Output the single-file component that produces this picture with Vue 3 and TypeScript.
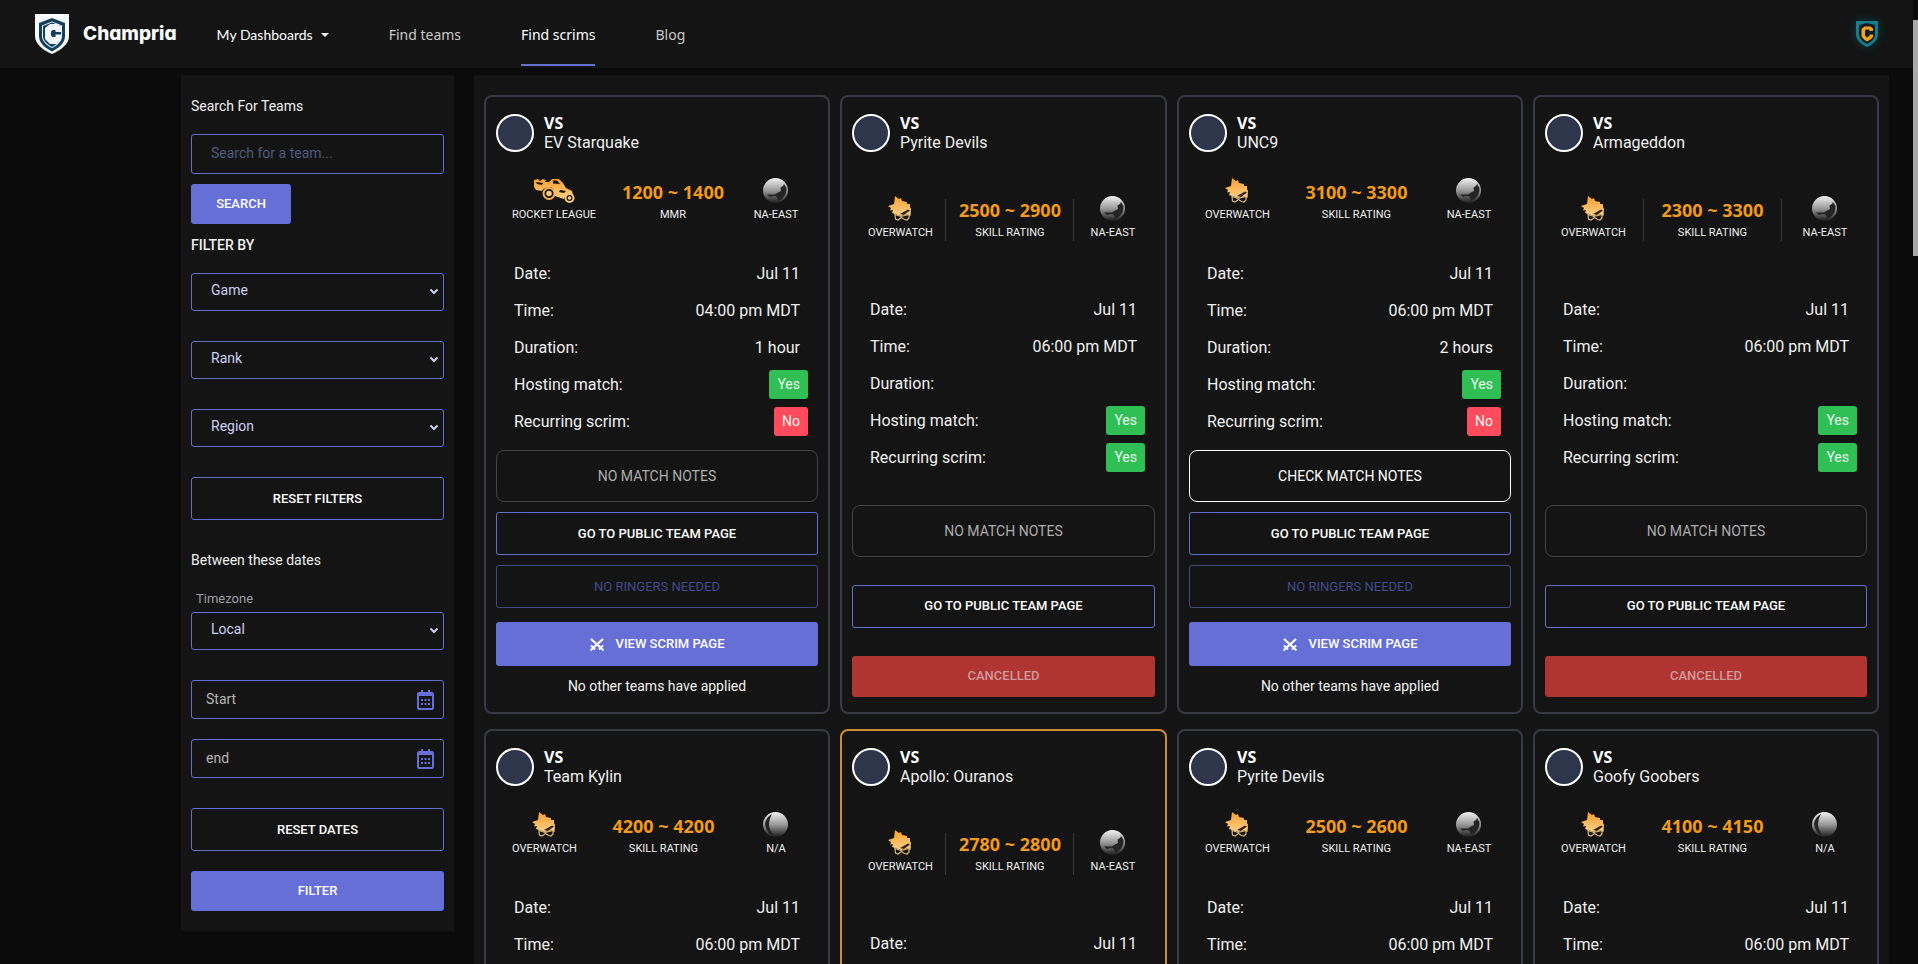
<script setup lang="ts">
import { ref } from 'vue'

interface Scrim {
  team: string
  game: 'ROCKET LEAGUE' | 'OVERWATCH'
  rating: string
  unit: string
  region: string
  time: string
  duration: string
  recurring: boolean
  notes: boolean
  divided: boolean
  cancelled: boolean
  highlight: boolean
}

const base = {
  game: 'OVERWATCH' as const,
  unit: 'SKILL RATING',
  region: 'NA-EAST',
  time: '06:00 pm MDT',
  duration: '2 hours',
  recurring: false,
  notes: false,
  divided: false,
  cancelled: false,
  highlight: false,
}
const off = { duration: '', recurring: true, divided: true, cancelled: true }

const scrims: Scrim[] = [
  { ...base, team: 'EV Starquake', game: 'ROCKET LEAGUE', rating: '1200 ~ 1400', unit: 'MMR', time: '04:00 pm MDT', duration: '1 hour' },
  { ...base, ...off, team: 'Pyrite Devils', rating: '2500 ~ 2900' },
  { ...base, team: 'UNC9', rating: '3100 ~ 3300', notes: true },
  { ...base, ...off, team: 'Armageddon', rating: '2300 ~ 3300' },
  { ...base, team: 'Team Kylin', rating: '4200 ~ 4200', region: 'N/A' },
  { ...base, ...off, team: 'Apollo: Ouranos', rating: '2780 ~ 2800', highlight: true },
  { ...base, team: 'Pyrite Devils', rating: '2500 ~ 2600' },
  { ...base, team: 'Goofy Goobers', rating: '4100 ~ 4150', region: 'N/A' },
]

const filters = ['Game', 'Rank', 'Region']
const dates = ['Start', 'end']
const search = ref('')
</script>

<template>
  <div class="app">
    <svg class="defs" aria-hidden="true">
      <defs>
        <linearGradient id="gold" x1="0" y1="0" x2="0" y2="1">
          <stop offset="0" stop-color="#f99f2c" />
          <stop offset="1" stop-color="#fbd08a" />
        </linearGradient>
        <linearGradient id="silver" x1="0" y1="0" x2="0" y2="1">
          <stop offset="0" stop-color="#f2f2f2" />
          <stop offset="0.5" stop-color="#9a9a9a" />
          <stop offset="1" stop-color="#1c1c1c" />
        </linearGradient>
      </defs>
    </svg>

    <div class="page">
      <header class="bar">
        <a class="brand" href="#">
          <svg width="34" height="40" viewBox="0 0 34 40" aria-hidden="true">
            <path d="M0 0H34V22C34 30 26 36 17 40C8 36 0 30 0 22Z" fill="#f7fbfd" />
            <path d="M17 4L30 9V22C30 29 24 34 17 37.500C10 34 4 29 4 22V9Z" fill="#12405c" />
            <path d="M17 7.500L27 11.500V22C27 27 22.500 31.500 17 34C11.500 31.500 7 27 7 22V11.500Z" fill="#f0f6f9" />
            <path d="M17 8.500L26 12V22C26 26.500 22 30.500 17 33C12 30.500 8 26.500 8 22V12Z" fill="#12405c" />
            <path d="M26 18V12.500L22.500 10H15L10 14V25L15 30H21.500L26 26V20.500H20.500V23H17.500L16 21.500V17.500L17.500 16H20.500V18Z" fill="#f0f6f9" />
          </svg>
          <span>Champria</span>
        </a>
        <nav class="nav">
          <button class="nav-link menu lit" type="button">My Dashboards <i class="caret"></i></button>
          <a class="nav-link" href="#">Find teams</a>
          <a class="nav-link lit active" href="#">Find scrims</a>
          <a class="nav-link" href="#">Blog</a>
        </nav>
        <button class="profile" type="button" aria-label="Profile">
          <svg width="24" height="28" viewBox="0 0 24 28" aria-hidden="true">
            <path d="M1 1H23V14C23 20 18 24.500 12 27C6 24.500 1 20 1 14Z" fill="#147d8c" />
            <path d="M4 5L12 3L20 5V14C20 18 17 21.500 12 24C7 21.500 4 18 4 14Z" fill="#0d1c20" />
            <path d="M18 11V8.500L15.500 6.500H9.500L6.500 9V16.500L9.500 20L12 21.500L15.500 19.500L18 17V14.500H14.500V16L12 17.500L10 15.500V10.500L11 9.500H14L14.500 11Z" fill="#f5a21c" />
          </svg>
        </button>
      </header>

      <div class="body">
        <form class="side" @submit.prevent>
          <label class="heading" for="team">Search For Teams</label>
          <input id="team" v-model="search" class="field" type="text" placeholder="Search for a team..." />
          <button class="btn solid search" type="submit">SEARCH</button>
          <h2 class="heading strong">FILTER BY</h2>
          <div v-for="f in filters" :key="f" class="pick">
            <select :aria-label="f"><option>{{ f }}</option></select>
            <svg width="10" height="8" viewBox="0 0 10 8" aria-hidden="true"><path d="M1.500 1.500L5 5L8.500 1.500" /></svg>
          </div>
          <button class="btn outline" type="button">RESET FILTERS</button>
          <h2 class="heading dates">Between these dates</h2>
          <label class="zone" for="zone">Timezone</label>
          <div class="pick">
            <select id="zone"><option>Local</option></select>
            <svg width="10" height="8" viewBox="0 0 10 8" aria-hidden="true"><path d="M1.500 1.500L5 5L8.500 1.500" /></svg>
          </div>
          <div v-for="d in dates" :key="d" class="date">
            <input type="text" :placeholder="d" :aria-label="d" />
            <svg width="17" height="20" viewBox="0 0 17 20" aria-hidden="true">
              <path d="M4 0H6V2H11V0H13V2H15Q17 2 17 4V18Q17 20 15 20H2Q0 20 0 18V4Q0 2 2 2H4ZM2 6V18H15V6Z" fill-rule="evenodd" />
              <path d="M4 9H6V11H4ZM7.500 9H9.500V11H7.500ZM11 9H13V11H11ZM4 13H6V15H4ZM7.500 13H9.500V15H7.500ZM11 13H13V15H11Z" />
            </svg>
          </div>
          <button class="btn outline reset" type="button">RESET DATES</button>
          <button class="btn solid filter" type="submit">FILTER</button>
        </form>

        <main class="board">
          <article v-for="(s, i) in scrims" :key="i" class="card" :class="{ highlight: s.highlight }">
            <div class="who">
              <span class="avatar"></span>
              <div>
                <div class="vs">VS</div>
                <div class="team">{{ s.team }}</div>
              </div>
            </div>

            <div class="stats">
              <div class="stat">
                <svg v-if="s.game === 'ROCKET LEAGUE'" class="icon" width="42" height="25" viewBox="0 0 42 25" aria-hidden="true">
                  <path d="M1 2L5 1L7 3L10 1L13 2L12 4L16 4L19 1L26 1L30 5L33 10L39 13L40 17L36 16Q32 17 31 21L22 18Q22 9 16 9Q10 10 9 13L3 12L1 9Z" fill="url(#gold)" />
                  <path d="M3 4L10 5L9 7L4 6ZM20 2.500L24 2.500L27 6L20 5.500ZM27 12L33 13L31 15L26 14Z" fill="#171512" />
                  <circle cx="16" cy="15.500" r="5.500" fill="#171512" stroke="#fab152" stroke-width="2" />
                  <circle cx="16" cy="15.500" r="2.800" fill="#fac577" />
                  <circle cx="36.500" cy="20" r="4" fill="#171512" stroke="#fbc87d" stroke-width="2" />
                  <circle cx="36.500" cy="20" r="1.800" fill="#fbd08a" />
                </svg>
                <svg v-else class="icon" width="24" height="25" viewBox="0 0 24 25" aria-hidden="true">
                  <path d="M7 0L11 3L13 2L14 5L19 6L19 8L22 8L22 11L23 13L22.500 20L19 18.500L13 20L7 18L4 17L5 14L2 14.500L3 12L0 10L6 8Z" fill="url(#gold)" />
                  <path d="M12 18L20 13.500L22 14.500L16 19Z" fill="#33261a" />
                  <path d="M7 18.500L13 20.500L21 18.500L21 22L19 24L16.500 23.500L13.500 21.500L10 24L7.500 23Z" fill="#171512" stroke="#dcb87c" stroke-width="1.200" />
                </svg>
                <span>{{ s.game }}</span>
              </div>
              <i v-if="s.divided" class="rule"></i>
              <div class="stat">
                <strong>{{ s.rating }}</strong>
                <span>{{ s.unit }}</span>
              </div>
              <i v-if="s.divided" class="rule"></i>
              <div class="stat region">
                <svg class="icon" width="25" height="25" viewBox="0 0 25 25" aria-hidden="true">
                  <circle cx="12.500" cy="12.500" r="12.500" fill="url(#silver)" />
                  <path v-if="s.region === 'N/A'" d="M9 2Q3 5 2 12Q3 19 8 23L10 23Q6 17 6 12Q6 7 9 2Z" fill="#242424" />
                  <path v-else d="M21 6L23.500 10Q24 17 18 21.500L15 22.500L13.500 18.500L10 18L7 19L4 16.500L12 16.500L15 14.500L18 13L17.500 9.500L20 8Z" fill="#242424" />
                </svg>
                <span>{{ s.region }}</span>
              </div>
            </div>

            <dl class="details">
              <div><dt>Date:</dt><dd>Jul 11</dd></div>
              <div><dt>Time:</dt><dd>{{ s.time }}</dd></div>
              <div><dt>Duration:</dt><dd>{{ s.duration }}</dd></div>
              <div><dt>Hosting match:</dt><dd class="badge yes">Yes</dd></div>
              <div>
                <dt>Recurring scrim:</dt>
                <dd class="badge" :class="s.recurring ? 'yes' : 'no'">{{ s.recurring ? 'Yes' : 'No' }}</dd>
              </div>
            </dl>

            <button v-if="s.notes" class="notes on" type="button">CHECK MATCH NOTES</button>
            <button v-else class="notes" type="button" disabled>NO MATCH NOTES</button>
            <a class="btn outline" href="#">GO TO PUBLIC TEAM PAGE</a>
            <button v-if="s.cancelled" class="btn cancelled" type="button" disabled>CANCELLED</button>
            <template v-else>
              <button class="btn outline faded" type="button" disabled>NO RINGERS NEEDED</button>
              <a class="btn solid view" href="#">
                <svg width="14" height="13" viewBox="0 0 14 13" aria-hidden="true">
                  <path d="M1 1L11 10M13 1L3 10" fill="none" stroke="#fff" stroke-width="2.200" />
                  <path d="M1 7.500L5 11.500M13 7.500L9 11.500M3 10L0.500 12.500M11 10L13.500 12.500" fill="none" stroke="#fff" stroke-width="1.800" />
                </svg>
                VIEW SCRIM PAGE
              </a>
              <p class="applied">No other teams have applied</p>
            </template>
          </article>
        </main>
      </div>
    </div>
    <div class="track" aria-hidden="true"><div class="thumb"></div></div>
  </div>
</template>

<style>
body {
  background: #0b0b0b;
}
</style>

<style scoped>
.app {
  display: flex;
  height: 100vh;
  overflow: hidden;
  background: #0b0b0b;
  color: #f0f0f0;
  font-family: Roboto, "Liberation Sans", sans-serif;
  font-size: 14px;
}
.app * {
  box-sizing: border-box;
}
.defs {
  position: absolute;
  width: 0;
  height: 0;
}
button,
input,
select {
  font-family: inherit;
  margin: 0;
}
a {
  text-decoration: none;
}
.page {
  flex: 1;
  min-width: 0;
  overflow-y: auto;
  scrollbar-width: none;
}
.track {
  width: 5px;
  padding-top: 20px;
}
.thumb {
  height: 25%;
  background: #a9a9a9;
}

.bar {
  display: flex;
  align-items: center;
  height: 68px;
  padding: 0 34px 0 35px;
  background: #141414;
}
.brand {
  display: flex;
  align-items: center;
  gap: 14px;
  color: #fff;
  font: 800 19px/40px Inter, sans-serif;
  font-feature-settings: "cv11";
}
.nav {
  display: flex;
  flex: 1;
  gap: 60px;
  margin-left: 40px;
  height: 68px;
  padding-bottom: 2px;
}
.nav-link {
  display: flex;
  align-items: center;
  padding: 5px 0 0;
  border: 0;
  border-bottom: 2px solid transparent;
  background: none;
  color: #c8c8c8;
  font: 14px/20px "Noto Sans", sans-serif;
}
.menu {
  font-family: Lato, sans-serif;
}
.lit {
  color: #fff;
}
.active {
  border-color: #6570d2;
}
.caret {
  margin-left: 8px;
  border: 4px solid transparent;
  border-top-color: #fff;
  border-bottom: 0;
}
.profile {
  padding: 0;
  border: 0;
  background: none;
  filter: drop-shadow(0 0 4px #063e46);
}
.profile svg {
  display: block;
}

.body {
  display: grid;
  grid-template-columns: 273px minmax(0, 1fr);
  gap: 20px;
  align-items: start;
  padding: 7px 24px 0 181px;
}
.side {
  display: flex;
  flex-direction: column;
  padding: 20px 10px;
  background: #141414;
}
.heading {
  margin: 0;
  font-size: 14px;
  font-weight: 400;
  line-height: 22px;
}
.strong {
  margin: 10px 0 17px;
  font-weight: 500;
}
.field {
  height: 40px;
  margin: 17px 0 10px;
  padding: 0 19px 2px;
  border: 1px solid #6570c8;
  border-radius: 3px;
  background: transparent;
  color: #ccd0f0;
  font-size: 14px;
}
.field::placeholder {
  color: #4e5a7c;
}
.pick {
  display: grid;
  align-items: center;
  margin-bottom: 30px;
}
.pick select,
.pick svg {
  grid-area: 1 / 1;
}
.pick select {
  appearance: none;
  width: 100%;
  height: 38px;
  padding: 0 19px 4px;
  border: 1px solid #6570c8;
  border-radius: 3px;
  background: transparent;
  color: #ccd0f0;
  font-size: 14px;
}
.pick svg {
  justify-self: end;
  margin-right: 5px;
  fill: none;
  stroke: #ccd0f0;
  stroke-width: 2;
  pointer-events: none;
}
.btn {
  display: flex;
  flex: none;
  align-items: center;
  justify-content: center;
  height: 43px;
  padding: 0;
  border: 0;
  border-radius: 3px;
  color: #fff;
  font-size: 13px;
  font-weight: 500;
  line-height: 20px;
}
.outline {
  border: 1px solid #6570c8;
  background: transparent;
}
.solid {
  background: #656fd5;
}
.search {
  width: 100px;
  height: 40px;
}
.filter {
  height: 40px;
}
.dates {
  margin: 29px 0 17px;
}
.zone {
  margin-bottom: 2px;
  padding-left: 5px;
  color: #9a9ea6;
  font-size: 13px;
  line-height: 22px;
}
.date {
  display: grid;
  align-items: center;
  margin-bottom: 20px;
}
.date input,
.date svg {
  grid-area: 1 / 1;
}
.date input {
  width: 100%;
  height: 39px;
  padding: 0 14px 2px;
  border: 1px solid #6570c8;
  border-radius: 3px;
  background: transparent;
  color: #b4b4b4;
  font-size: 14px;
}
.date input::placeholder {
  color: #b4b4b4;
}
.date svg {
  justify-self: end;
  margin-right: 10px;
  fill: #656fd5;
}
.reset {
  margin: 10px 0 20px;
}

.board {
  display: grid;
  grid-template-columns: 346fr 327fr 346fr 346fr;
  gap: 15px 10px;
  padding: 20px 10px;
  background: #141414;
}
.card {
  display: flex;
  flex-direction: column;
  justify-content: space-between;
  padding: 17px 10px 15px;
  border: 2px solid #373943;
  border-radius: 8px;
}
.highlight {
  border-color: #d08a35;
}
.who {
  display: flex;
  align-items: center;
  gap: 10px;
  height: 38px;
}
.avatar {
  width: 38px;
  height: 38px;
  border: 2px solid #fff;
  border-radius: 50%;
  background: #2d364a;
}
.vs {
  color: #fff;
  font: 700 16px/20px "Noto Sans", sans-serif;
}
.team {
  font-size: 16px;
  line-height: 20px;
}
.stats {
  display: flex;
  align-items: flex-end;
  justify-content: space-between;
  height: 45px;
  margin-top: 26px;
  padding: 0 16px;
}
.stat {
  display: flex;
  flex-direction: column;
  align-items: center;
  font-size: 11px;
  line-height: 14px;
}
.icon {
  margin-bottom: 5px;
}
.stat strong {
  margin-bottom: 6px;
  color: #f39a17;
  font: 700 18px/20px "Noto Sans", sans-serif;
}
.region {
  width: 52px;
}
.stat span {
  margin-bottom: 1px;
}
.rule {
  width: 1px;
  height: 42px;
  background: #373943;
}
.details {
  margin: 32px 0 0;
  padding: 0 10px 0 18px;
  font-size: 16px;
}
.details div {
  display: flex;
  align-items: center;
  justify-content: space-between;
  height: 37px;
}
.details dd {
  margin: 0;
  padding: 0 8px;
}
.badge {
  border-radius: 3px;
  color: #e9f7ec;
  font-size: 14px;
  line-height: 29px;
}
.yes {
  background: #2fbf55;
}
.no {
  background: #ff4b5c;
}
.notes {
  height: 52px;
  margin-top: 10px;
  border: 1px solid #444;
  border-radius: 8px;
  background: transparent;
  color: #adadad;
  font-size: 14px;
}
.notes.on {
  border-color: #fff;
  color: #fff;
}
.card .btn {
  margin-top: 10px;
}
.card .faded {
  border-color: #434a82;
  color: #43498a;
  font-weight: 400;
}
.card .view {
  gap: 12px;
  height: 44px;
  margin-top: 14px;
}
.cancelled {
  background: #b03431;
  color: #cf9a99;
}
.card .cancelled {
  height: 41px;
}
.applied {
  margin: 10px 0 0;
  text-align: center;
  line-height: 21px;
}
</style>
